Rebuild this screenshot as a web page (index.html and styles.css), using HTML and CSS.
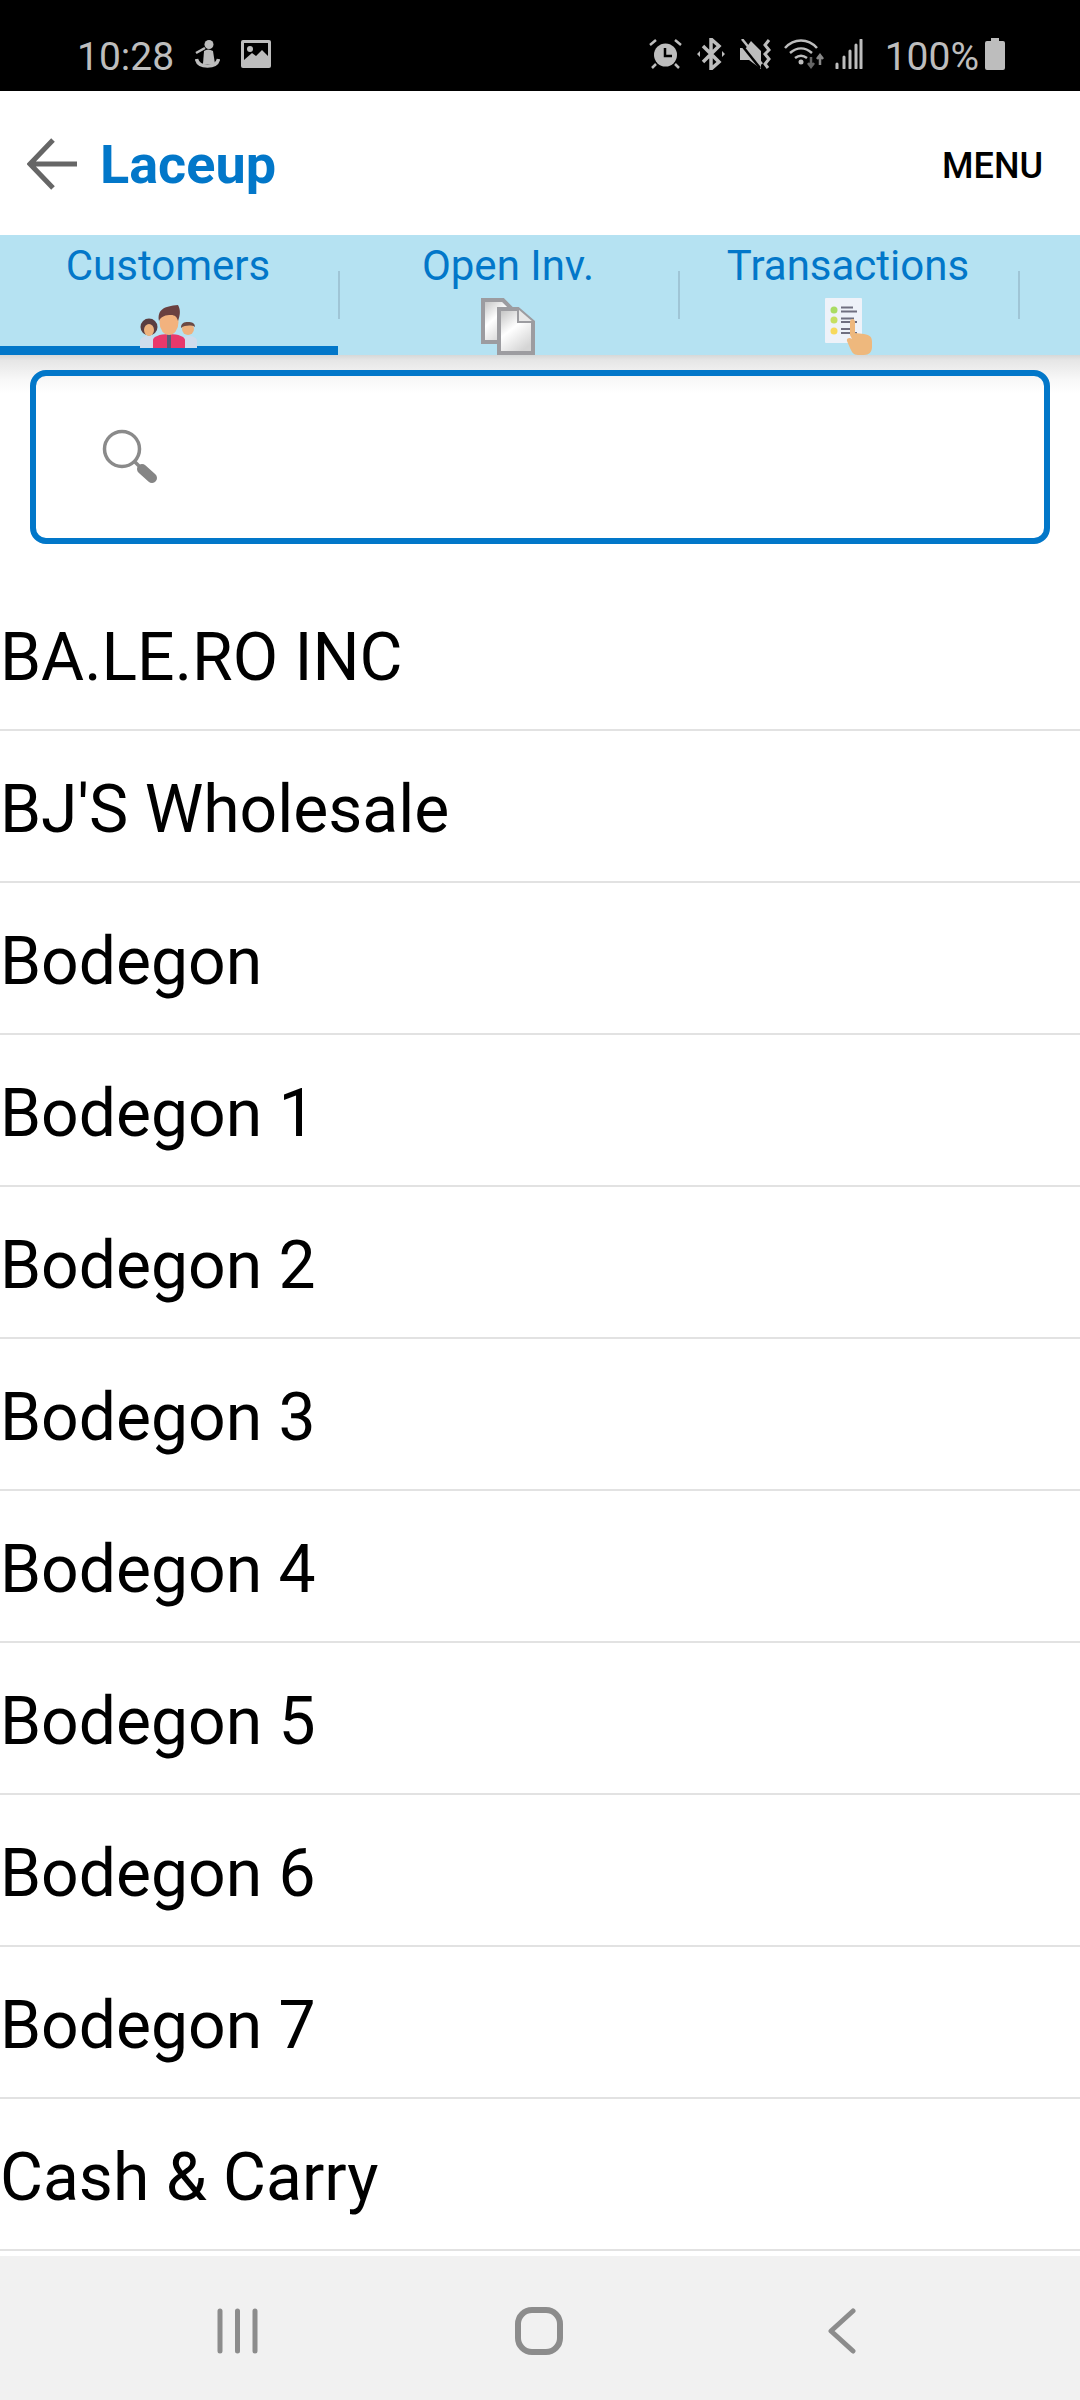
FILE: index.html
```html
<!DOCTYPE html>
<html lang="en">
<head>
    <meta charset="UTF-8">
    <meta name="viewport" content="width=device-width, initial-scale=1.0">
    <title>Laceup</title>
    <link rel="stylesheet" href="styles.css">
</head>
<body>
    <div class="status-bar">
        <span class="status-time">10:28</span>
        <svg class="ic-figure" width="25" height="28" viewBox="0 0 25 28"><circle cx="14" cy="4.500" r="4.500" fill="#bdbdbd"/><path d="M9 11q4-3 9 0l2 13h-12z" fill="#bdbdbd"/><path d="M1.500 19q1.500 7 11 7t11-7" fill="none" stroke="#bdbdbd" stroke-width="3.500"/><path d="M1 13l9-5" stroke="#bdbdbd" stroke-width="2.500"/></svg>
        <svg class="ic-image" width="30" height="28" viewBox="0 0 30 28"><rect width="30" height="28" rx="2" fill="#bdbdbd"/><rect x="3" y="3" width="24" height="18" fill="#000"/><path d="M3 20l8-7 4 3 6-6 6 6v6H3z" fill="#bdbdbd"/><circle cx="9" cy="9" r="3" fill="#bdbdbd"/></svg>
        <div class="status-right">
            <svg class="ic-alarm" width="33" height="30" viewBox="0 0 33 30"><circle cx="16.500" cy="16" r="11.500" fill="#bdbdbd"/><path d="M16 9v8h7" fill="none" stroke="#000" stroke-width="2.500"/><path d="M1 6l6-5M32 6l-6-5M3 29l4-4M30 29l-4-4" stroke="#bdbdbd" stroke-width="2.500"/></svg>
            <svg class="ic-bt" width="28" height="32" viewBox="0 0 28 32"><path d="M6 8l16 16-8 7V1l8 7L6 24" fill="none" stroke="#bdbdbd" stroke-width="3.500"/><path d="M0 16l3-3v6zM28 16l-3-3v6z" fill="#bdbdbd"/></svg>
            <svg class="ic-mute" width="32" height="30" viewBox="0 0 32 30"><path d="M0 9h6l5-7 10 10v18L9 21H0z" fill="#bdbdbd"/><path d="M0 4l20 25" stroke="#000" stroke-width="2.500"/><path d="M2 0l20 25" stroke="#bdbdbd" stroke-width="2.500"/><path d="M29 1l-4 5 4 5-4 4 4 5-4 5 3 4" fill="none" stroke="#bdbdbd" stroke-width="3"/></svg>
            <svg class="ic-wifi" width="41" height="32" viewBox="0 0 41 32"><path d="M1 10C10 0 24 0 33 10M6 15c7-6 15-6 22 0M11 20c4-3 8-3 12 0" fill="none" stroke="#bdbdbd" stroke-width="2.500"/><circle cx="17" cy="24" r="2.500" fill="#bdbdbd"/><path d="M27 19v8M24 25l3 4 3-4" fill="none" stroke="#666" stroke-width="2.500"/><path d="M36 27v-9M33 21l3-4 3 4" fill="none" stroke="#888" stroke-width="2.500"/></svg>
            <svg class="ic-signal" width="28" height="30" viewBox="0 0 28 30"><path d="M2 25v4M9 18v11M15 12v17M21 6v23M26 1v28" stroke="#bdbdbd" stroke-width="3" stroke-linecap="round"/></svg>
            <span class="status-pct">100%</span>
            <svg class="ic-batt" width="20" height="32" viewBox="0 0 20 32"><path d="M6 0h8v3h4a2 2 0 0 1 2 2v25a2 2 0 0 1-2 2H2a2 2 0 0 1-2-2V5a2 2 0 0 1 2-2h4z" fill="#bdbdbd"/></svg>
        </div>
    </div>

    <div class="app-bar">
        <svg class="back-arrow" width="52" height="52" viewBox="0 0 52 52"><path d="M50 26H3M26 2L3 26l23 24" fill="none" stroke="#666" stroke-width="5"/></svg>
        <span class="app-title">Laceup</span>
        <span class="app-menu">MENU</span>
    </div>

    <div class="tabs">
        <div class="tab tab-active">
            <span class="tab-label">Customers</span>
            <svg class="tab-icon tab-icon-low" width="57" height="43" viewBox="0 0 57 43">
                <path d="M0 43v-7c0-3 4-5 8-5s8 2 8 5v7z" fill="#cfdcec"/>
                <circle cx="9" cy="22" r="8.500" fill="#5a3d40"/>
                <ellipse cx="9" cy="25" rx="5" ry="6" fill="#eeb27e"/>
                <path d="M42 43v-7c0-3 3-5 7-5s8 2 8 5v7z" fill="#cfdcec"/>
                <circle cx="48" cy="24" r="6" fill="#eeb27e"/>
                <path d="M41 23c0-5 3-6 7-6s7 1 7 5c-3-2-10-2-14 1z" fill="#6b4a45"/>
                <path d="M13 43v-8c0-3 6-6 16-6s16 3 16 6v8z" fill="#e9386b"/>
                <path d="M27 29h4v14h-4z" fill="#5a5a78"/>
                <ellipse cx="29" cy="17" rx="9.500" ry="13" fill="#f2b27e"/>
                <path d="M19 16c-2-11 5-15 19-16 3 5 2 11 0 16-1-4-3-6-7-6-5 0-10 1-12 6z" fill="#6a4040"/>
            </svg>
        </div>
        <div class="tab">
            <span class="tab-label">Open Inv.</span>
            <svg class="tab-icon" width="54" height="57" viewBox="0 0 54 57">
                <defs>
                    <linearGradient id="paper" x1="0" y1="0" x2="0.6" y2="1">
                        <stop offset="0" stop-color="#bdbdbd"/>
                        <stop offset="0.5" stop-color="#fff"/>
                        <stop offset="1" stop-color="#d5d5d5"/>
                    </linearGradient>
                </defs>
                <path d="M2 2h20l8 8v34h-28z" fill="url(#paper)" stroke="#9c9ca0" stroke-width="4"/>
                <path d="M18 11h19l15 13v31h-34z" fill="url(#paper)" stroke="#9c9ca0" stroke-width="4"/>
                <path d="M37 11v13h15" fill="#e8e8e8" stroke="#9c9ca0" stroke-width="2"/>
            </svg>
        </div>
        <div class="tab">
            <span class="tab-label">Transactions</span>
            <svg class="tab-icon" width="47" height="57" viewBox="0 0 47 57">
                <rect width="37" height="45" rx="1" fill="#eef2f9"/>
                <circle cx="9" cy="12" r="3.500" fill="#a9dc64"/>
                <circle cx="9" cy="22" r="3.500" fill="#c6df62"/>
                <circle cx="9" cy="33" r="3.500" fill="#f7d95c"/>
                <path d="M16 9.500h12M16 13.500h16M16 20.500h13M16 24h16M16 31h12M16 35h16" stroke="#6f6f80" stroke-width="2"/>
                <path d="M25 37V24c0-4 5-4 5 0v11l9 1c6 1 8 3 8 8v5c0 5-3 8-8 8h-6c-5 0-6-3-8-7l-3-7c-1-3 3-4 5-2z" fill="#eeb87d"/>
            </svg>
        </div>
    </div>

    <div class="search-wrap">
        <div class="search-box">
            <svg class="search-icon" width="56" height="56" viewBox="0 0 56 56">
                <circle cx="20" cy="20" r="17.500" fill="none" stroke="#8a8a8a" stroke-width="3.500"/>
                <path d="M32 32l7 7" stroke="#8a8a8a" stroke-width="3.500"/>
                <path d="M40 40l10 9" stroke="#858585" stroke-width="10" stroke-linecap="round"/>
            </svg>
        </div>
    </div>

    <ul class="customer-list">
        <li>BA.LE.RO INC</li>
        <li>BJ'S Wholesale</li>
        <li>Bodegon</li>
        <li>Bodegon 1</li>
        <li>Bodegon 2</li>
        <li>Bodegon 3</li>
        <li>Bodegon 4</li>
        <li>Bodegon 5</li>
        <li>Bodegon 6</li>
        <li>Bodegon 7</li>
        <li>Cash &amp; Carry</li>
    </ul>

    <div class="nav-bar">
        <svg class="nav-recent" width="41" height="46" viewBox="0 0 41 46"><path d="M3 3v40M20.500 3v40M38 3v40" stroke="#8c8c8c" stroke-width="5" stroke-linecap="round"/></svg>
        <svg class="nav-home" width="48" height="48" viewBox="0 0 48 48"><rect x="3" y="3" width="42" height="42" rx="14" fill="none" stroke="#8c8c8c" stroke-width="6"/></svg>
        <svg class="nav-back" width="28" height="46" viewBox="0 0 28 46"><path d="M25 3L3 23l22 20" fill="none" stroke="#8c8c8c" stroke-width="5" stroke-linecap="round" stroke-linejoin="round"/></svg>
    </div>
</body>
</html>
```

FILE: styles.css
```css
body {
    margin: 0;
    width: 1080px;
    height: 2400px;
    display: flex;
    flex-direction: column;
    overflow: hidden;
    background-color: #fff;
    font-family: Roboto, sans-serif;
}

/* Status bar */
.status-bar {
    height: 91px;
    flex-shrink: 0;
    box-sizing: border-box;
    padding: 38px 75px 21px 77px;
    display: flex;
    align-items: center;
    background-color: #000;
    color: #bdbdbd;
    font-size: 39px;
}

.status-time {
    margin: 5px 21px 0 0;
}

.ic-figure {
    margin-right: 21px;
}

.status-right {
    margin-left: auto;
    display: flex;
    align-items: center;
}

.ic-alarm {
    margin-right: 15px;
}

.ic-bt {
    margin-right: 15px;
}

.ic-mute {
    margin-right: 12px;
}

.ic-wifi {
    margin-right: 10px;
}

.ic-signal {
    margin-right: 22px;
}

.status-pct {
    margin: 5px 6px 0 0;
}

/* App bar */
.app-bar {
    height: 144px;
    flex-shrink: 0;
    box-sizing: border-box;
    padding: 2px 37px 0 27px;
    display: flex;
    align-items: center;
}

.back-arrow {
    margin-right: 21px;
    filter: blur(0.6px);
}

.app-title {
    font-size: 54px;
    font-weight: 700;
    color: #0277c9;
}

.app-menu {
    margin-left: auto;
    margin-top: 3px;
    font-size: 36px;
    font-weight: 500;
    color: #000;
}

/* Tabs */
.tabs {
    height: 120px;
    flex-shrink: 0;
    display: flex;
    background-color: #b5e2f2;
}

.tab {
    width: 340px;
    box-sizing: border-box;
    padding-right: 4px;
    position: relative;
    display: flex;
    flex-direction: column;
    align-items: center;
    color: #0277c9;
}

/* divider between tabs */
.tab::after {
    content: "";
    position: absolute;
    top: 36px;
    left: 338px;
    width: 2px;
    height: 48px;
    background-color: #9fc5d6;
}

.tab-label {
    margin-top: 6px;
    font-size: 42px;
    line-height: 50px;
}

.tab-icon {
    margin-top: 7px;
    position: relative;
    filter: blur(0.5px);
}

.tab-icon-low {
    margin-top: 14px;
}

/* underline of the selected tab, the icon sits on top of it */
.tab-active::before {
    content: "";
    position: absolute;
    left: 0;
    bottom: 0;
    width: 338px;
    height: 9px;
    background-color: #0277c9;
}

/* Search */
.search-wrap {
    flex-shrink: 0;
    padding: 15px 30px 35px;
    background-image: linear-gradient(#d6d8d8, #e6e6e6 14%, #f8f8f8 65%, #fff);
    background-size: 100% 38px;
    background-repeat: no-repeat;
}

.search-box {
    height: 174px;
    box-sizing: border-box;
    padding-left: 66px;
    display: flex;
    align-items: center;
    border: 6px solid #0277c9;
    border-radius: 16px;
}

/* Customer list */
.customer-list {
    flex: 1;
    margin: 0;
    padding: 0;
    list-style: none;
    overflow: hidden;
}

.customer-list li {
    height: 152px;
    box-sizing: border-box;
    padding-top: 7px;
    display: flex;
    align-items: center;
    border-bottom: 2px solid #e2e2e2;
    font-size: 66px;
    color: #000;
}

/* Bottom navigation */
.nav-bar {
    height: 144px;
    flex-shrink: 0;
    box-sizing: border-box;
    padding: 6px 0 0 217px;
    display: flex;
    align-items: center;
    background-color: #f1f1f1;
}

.nav-home {
    margin-left: 257px;
}

.nav-back {
    margin-left: 265px;
}
```
